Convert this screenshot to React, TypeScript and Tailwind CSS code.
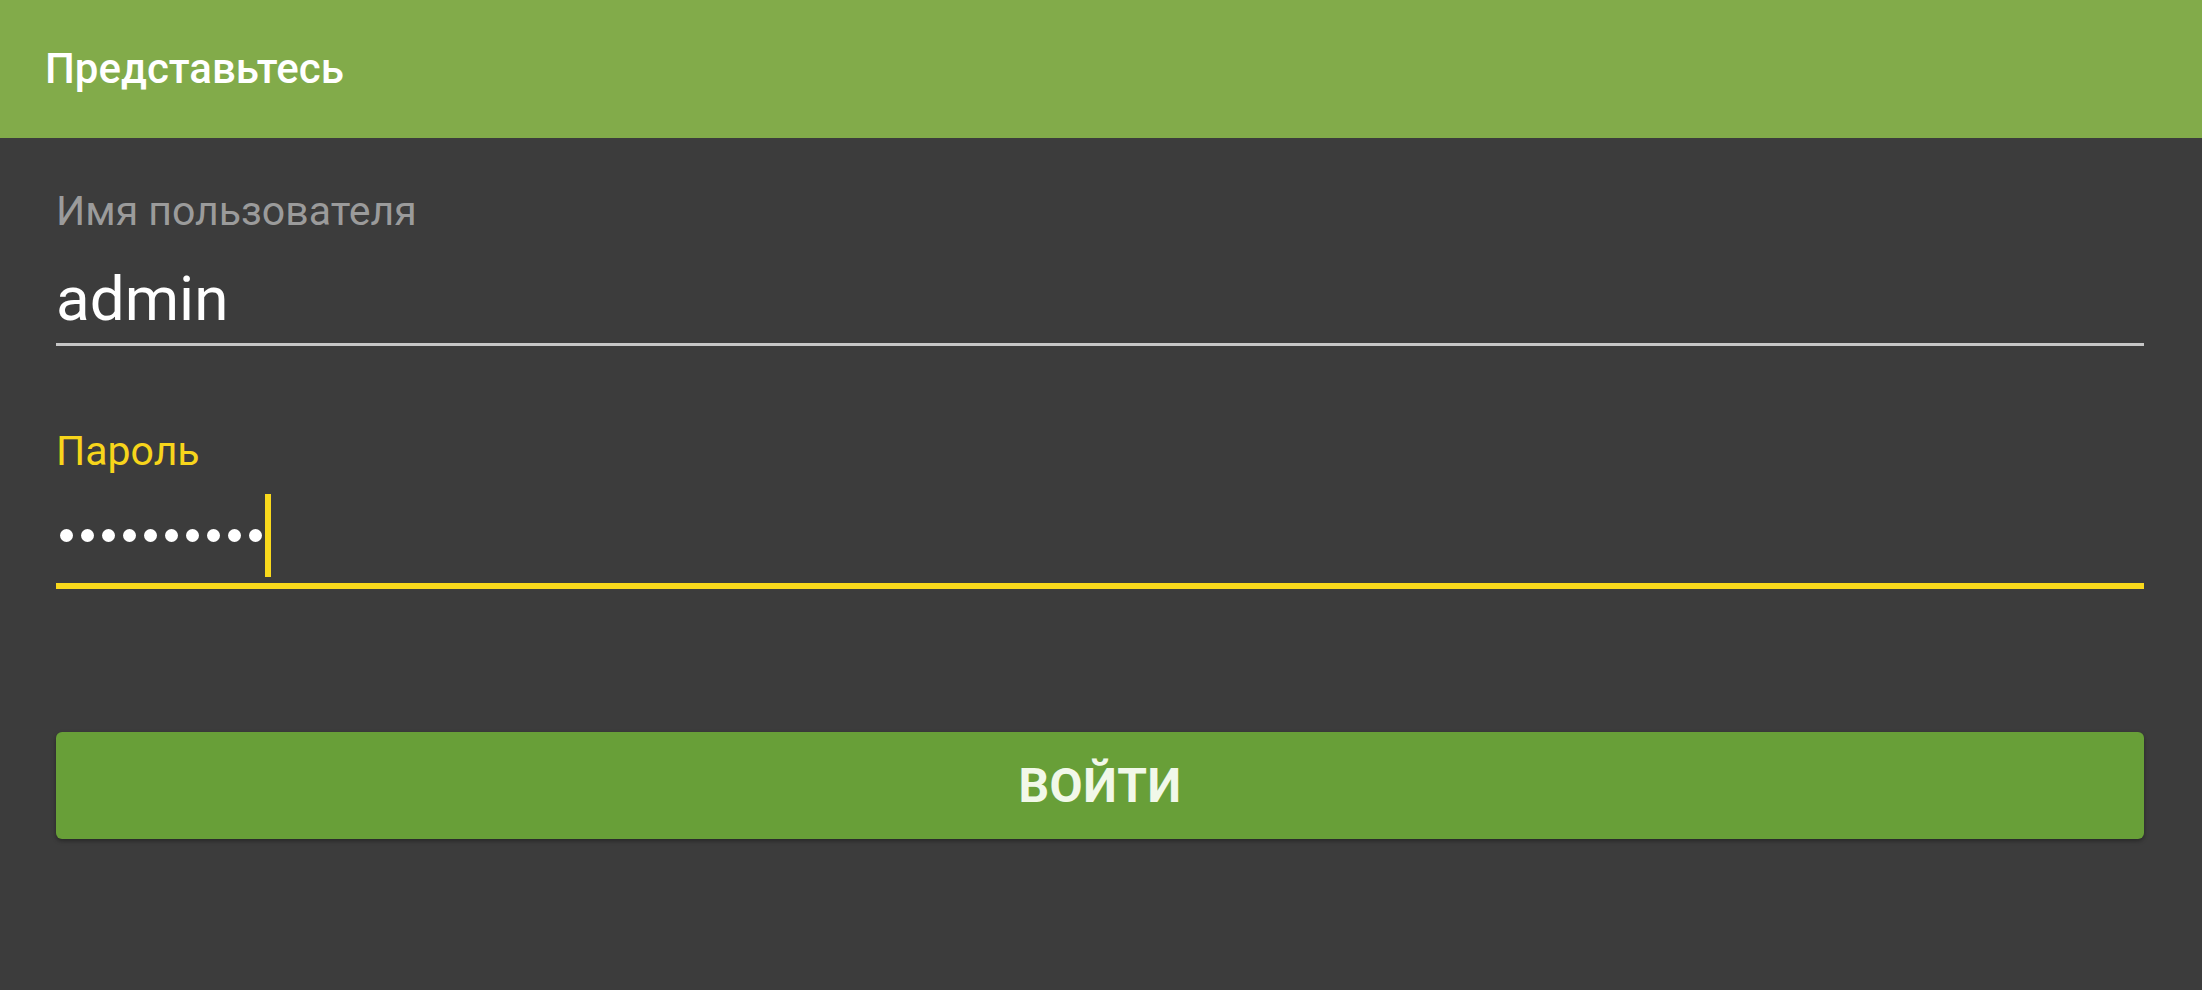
const font = { fontFamily: 'Roboto, "Noto Sans", sans-serif' };

const PasswordDots = ({ count }: { count: number }) => (
  <div className="flex items-center gap-[8px] pl-[4px]">
    {Array.from({ length: count }).map((_, i) => (
      <span key={i} className="block w-[13px] h-[13px] rounded-full bg-white" />
    ))}
  </div>
);

const App = () => {
  return (
    <div className="flex flex-col min-h-screen w-full bg-[#3c3c3c]" style={font}>
      {/* Toolbar */}
      <header className="h-[138px] flex items-center px-[45px] bg-[#82ab4a]">
        <h1 className="text-[42px] leading-[48px] font-medium text-white">Представьтесь</h1>
      </header>

      <main className="flex flex-col px-[56px] pt-[49px] pr-[58px]">
        {/* Username field */}
        <label className="text-[41px] leading-[48px] text-[#9b9b9b]">Имя пользователя</label>
        <div className="mt-[28px] pb-[8px] border-b-[3px] border-[#c6c6c6]">
          <div className="text-[62px] leading-[72px] text-white">admin</div>
        </div>

        {/* Password field, focused */}
        <label className="mt-[81px] text-[41px] leading-[48px] text-[#f7d51b]">Пароль</label>
        <div className="mt-[19px] pb-[6px] border-b-[6px] border-[#f9d91c]">
          <div className="h-[83px] flex items-center">
            <PasswordDots count={10} />
            <span className="block ml-[3px] w-[6px] h-[83px] bg-[#f9d91c]" />
          </div>
        </div>

        <button
          type="button"
          className="mt-[143px] h-[107px] w-full rounded-[6px] bg-[#689f38] shadow-[0_2px_4px_rgba(0,0,0,0.35)] text-[48px] font-bold text-[#f1f8e9] tracking-[0.5px]"
        >
          ВОЙТИ
        </button>
      </main>
    </div>
  );
};

export default App;
